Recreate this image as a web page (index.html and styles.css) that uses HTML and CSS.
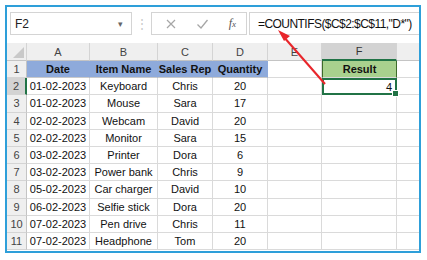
FILE: index.html
```html
<!DOCTYPE html>
<html>
<head>
<meta charset="utf-8">
<link rel="stylesheet" href="styles.css">
</head>
<body>
<div class="frame">
  <div class="fbar">
    <div class="namebox"><span>F2</span><span class="drop">&#9662;</span></div>
    <div class="dots">&#8942;</div>
    <div class="btns">
      <svg class="ic" width="12" height="12" viewBox="0 0 12 12"><path d="M2 2 L10 10 M10 2 L2 10" stroke="#A6A6A6" stroke-width="1.2" fill="none"/></svg>
      <svg class="ic" width="13" height="12" viewBox="0 0 13 12"><path d="M1.5 6.5 L5 10 L11.5 2" stroke="#A6A6A6" stroke-width="1.3" fill="none"/></svg>
      <span class="fx">f<span class="x">x</span></span>
    </div>
    <div class="formula">=COUNTIFS($C$2:$C$11,"D*")</div>
  </div>
  <div class="grid">
    <div class="h corner"><span class="tri"></span></div>
    <div class="h">A</div><div class="h">B</div><div class="h">C</div><div class="h">D</div><div class="h">E</div><div class="h hsel">F</div><div class="h"></div>

    <div class="r">1</div><div class="c blue b">Date</div><div class="c blue b">Item Name</div><div class="c blue b">Sales Rep</div><div class="c blue b">Quantity</div><div class="c"></div><div class="c green b">Result</div><div class="c"></div>

    <div class="r rsel">2</div><div class="c">01-02-2023</div><div class="c">Keyboard</div><div class="c">Chris</div><div class="c">20</div><div class="c"></div><div class="c sel">4<span class="handle"></span></div><div class="c"></div>

    <div class="r">3</div><div class="c">01-02-2023</div><div class="c">Mouse</div><div class="c">Sara</div><div class="c">17</div><div class="c"></div><div class="c"></div><div class="c"></div>

    <div class="r">4</div><div class="c">02-02-2023</div><div class="c">Webcam</div><div class="c">David</div><div class="c">20</div><div class="c"></div><div class="c"></div><div class="c"></div>

    <div class="r">5</div><div class="c">02-02-2023</div><div class="c">Monitor</div><div class="c">Sara</div><div class="c">15</div><div class="c"></div><div class="c"></div><div class="c"></div>

    <div class="r">6</div><div class="c">03-02-2023</div><div class="c">Printer</div><div class="c">Dora</div><div class="c">6</div><div class="c"></div><div class="c"></div><div class="c"></div>

    <div class="r">7</div><div class="c">03-02-2023</div><div class="c">Power bank</div><div class="c">Chris</div><div class="c">9</div><div class="c"></div><div class="c"></div><div class="c"></div>

    <div class="r">8</div><div class="c">05-02-2023</div><div class="c">Car charger</div><div class="c">David</div><div class="c">10</div><div class="c"></div><div class="c"></div><div class="c"></div>

    <div class="r">9</div><div class="c">06-02-2023</div><div class="c">Selfie stick</div><div class="c">Dora</div><div class="c">20</div><div class="c"></div><div class="c"></div><div class="c"></div>

    <div class="r">10</div><div class="c">07-02-2023</div><div class="c">Pen drive</div><div class="c">Chris</div><div class="c">11</div><div class="c"></div><div class="c"></div><div class="c"></div>

    <div class="r">11</div><div class="c">07-02-2023</div><div class="c">Headphone</div><div class="c">Tom</div><div class="c">20</div><div class="c"></div><div class="c"></div><div class="c"></div>
  </div>
  <svg class="arrow" width="415" height="248" viewBox="0 0 415 248">
    <line x1="318" y1="77" x2="276" y2="29" stroke="#E8262B" stroke-width="2"/>
    <polygon points="271,23 283,29 277,34" fill="#E8262B"/>
  </svg>
</div>
</body>
</html>
```
FILE: styles.css
```css
html, body {
  margin: 0;
  padding: 0;
  background: #ffffff;
}
body {
  font-family: "Liberation Sans", Arial, sans-serif;
  color: #000;
}
.frame {
  position: relative;
  margin: 5px 0 0 5px;
  width: 416px;
  height: 248px;
  box-sizing: border-box;
  border: 2px solid #2E9FD9;
  overflow: hidden;
  background: #ffffff;
}
.fbar {
  height: 36px;
  box-sizing: border-box;
  padding: 5px 0 0 3px;
  display: flex;
  align-items: flex-start;
}
.namebox {
  width: 122px;
  height: 23px;
  box-sizing: border-box;
  border: 1px solid #D4D4D4;
  display: flex;
  align-items: center;
  justify-content: space-between;
  padding: 0 8px 0 4px;
  font-size: 12px;
  color: #222;
}
.drop {
  font-size: 9px;
  color: #666;
}
.dots {
  width: 19px;
  height: 23px;
  display: flex;
  align-items: center;
  justify-content: center;
  color: #C8C8C8;
  font-size: 12px;
}
.btns {
  width: 96px;
  height: 23px;
  box-sizing: border-box;
  border: 1px solid #D4D4D4;
  display: flex;
  align-items: center;
  padding: 0 10px 0 13px;
  justify-content: space-between;
}
.fx {
  font-family: "Liberation Serif", serif;
  font-style: italic;
  font-size: 12px;
  color: #555;
}
.fx .x {
  font-size: 9px;
}
.formula {
  flex: 1;
  margin-left: 2px;
  height: 23px;
  box-sizing: border-box;
  border: 1px solid #D4D4D4;
  border-right: none;
  display: flex;
  align-items: center;
  padding-left: 8px;
  font-size: 12px;
  letter-spacing: -0.55px;
  color: #111;
}
.grid {
  display: grid;
  grid-template-columns: 20px 63px 68px 55px 55px 54px 75px 30px;
  grid-template-rows: 18px repeat(11, 17.2px);
  font-size: 11px;
}
.h {
  background: #EFEFEF;
  border-right: 1px solid #D4D4D4;
  border-bottom: 1px solid #C4C4C4;
  box-sizing: border-box;
  display: flex;
  align-items: center;
  justify-content: center;
  color: #444;
  font-size: 11px;
}
.corner {
  position: relative;
}
.tri {
  position: absolute;
  right: 2px;
  bottom: 2px;
  width: 0;
  height: 0;
  border-left: 11px solid transparent;
  border-bottom: 11px solid #C9C9C9;
}
.hsel {
  background: #D3D3D3;
  border-bottom: 2px solid #217346;
  color: #333;
}
.r {
  background: #EFEFEF;
  border-right: 1px solid #C4C4C4;
  border-bottom: 1px solid #D4D4D4;
  box-sizing: border-box;
  display: flex;
  align-items: center;
  justify-content: center;
  color: #444;
}
.rsel {
  background: #D3D3D3;
  border-right: 2px solid #217346;
}
.c {
  border-right: 1px solid #DADADA;
  border-bottom: 1px solid #DADADA;
  box-sizing: border-box;
  display: flex;
  align-items: center;
  justify-content: center;
  white-space: nowrap;
  color: #111;
}
.b {
  font-weight: bold;
}
.blue {
  background: #8EAADB;
  border-right-color: #8EAADB;
  border-bottom-color: #C9C9C9;
}
.green {
  background: #A9D18E;
  border-left: 1px solid #3E6B2A;
  border-right: 1px solid #3E6B2A;
}
.sel {
  position: relative;
  border: 2px solid #217346;
  justify-content: flex-end;
  padding-right: 3px;
}
.handle {
  position: absolute;
  right: -4px;
  bottom: -4px;
  width: 5px;
  height: 5px;
  background: #217346;
  border: 1px solid #ffffff;
}
.arrow {
  position: absolute;
  left: 0;
  top: 0;
  pointer-events: none;
}
```
